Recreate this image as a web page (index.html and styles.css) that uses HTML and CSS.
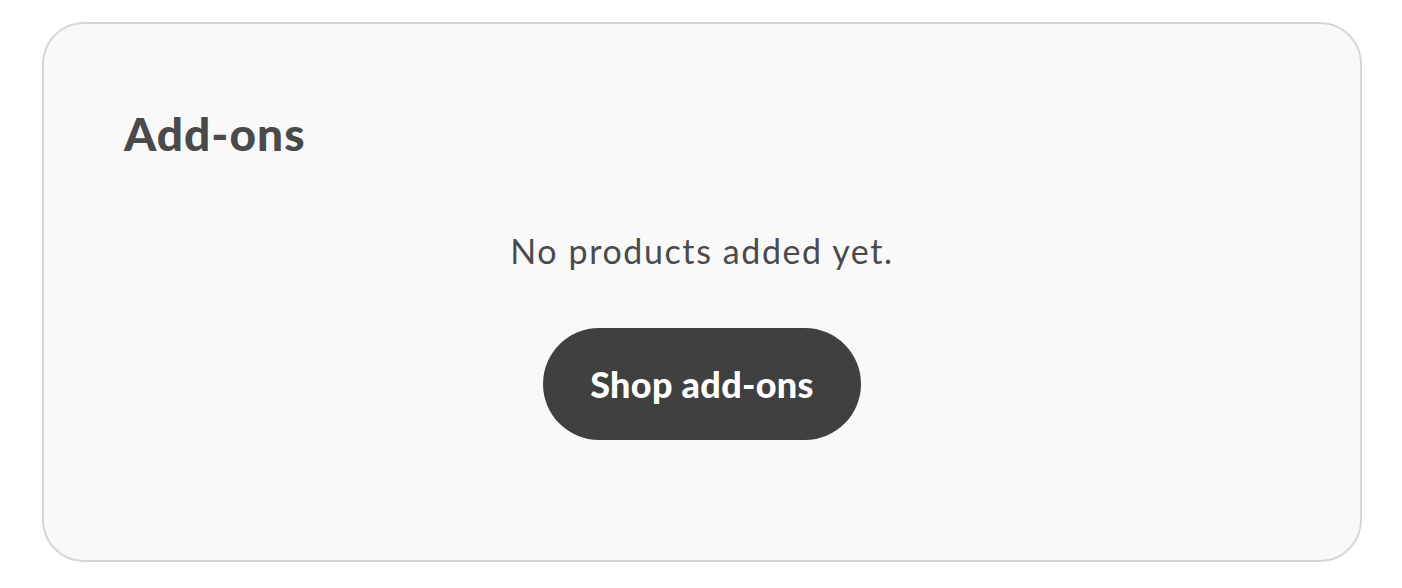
FILE: index.html
```html
<!DOCTYPE html>
<html>
<head>
<meta charset="utf-8">
<link rel="stylesheet" href="styles.css">
</head>
<body>
<section class="card">
  <h2 class="card-title">Add-ons</h2>
  <div class="empty">
    <p class="empty-text">No products added yet.</p>
    <a class="btn" href="#">Shop add-ons</a>
  </div>
</section>
</body>
</html>
```
FILE: styles.css
```css
html, body {
  margin: 0;
  padding: 0;
  background: #ffffff;
}
body {
  padding: 22px 40px 0 42px;
  font-family: "Lato", "Liberation Sans", sans-serif;
}
.card {
  box-sizing: border-box;
  width: 1320px;
  height: 540px;
  border: 2px solid #d6d6d6;
  border-radius: 42px;
  background: #f9f9f9;
  padding: 82px 80px 0 80px;
}
.card-title {
  margin: 0;
  font-size: 46px;
  line-height: 56px;
  font-weight: 900;
  letter-spacing: 1px;
  color: #4a4a4a;
}
.empty {
  display: flex;
  flex-direction: column;
  align-items: center;
  margin-top: 67px;
}
.empty-text {
  margin: 0;
  font-size: 34px;
  line-height: 44px;
  letter-spacing: 1.6px;
  color: #4b4b4b;
}
.btn {
  margin-top: 55px;
  display: flex;
  align-items: center;
  justify-content: center;
  width: 318px;
  height: 112px;
  border-radius: 56px;
  background: #404040;
  color: #ffffff;
  font-size: 36px;
  font-weight: 900;
  letter-spacing: 0.3px;
  text-decoration: none;
}
```
